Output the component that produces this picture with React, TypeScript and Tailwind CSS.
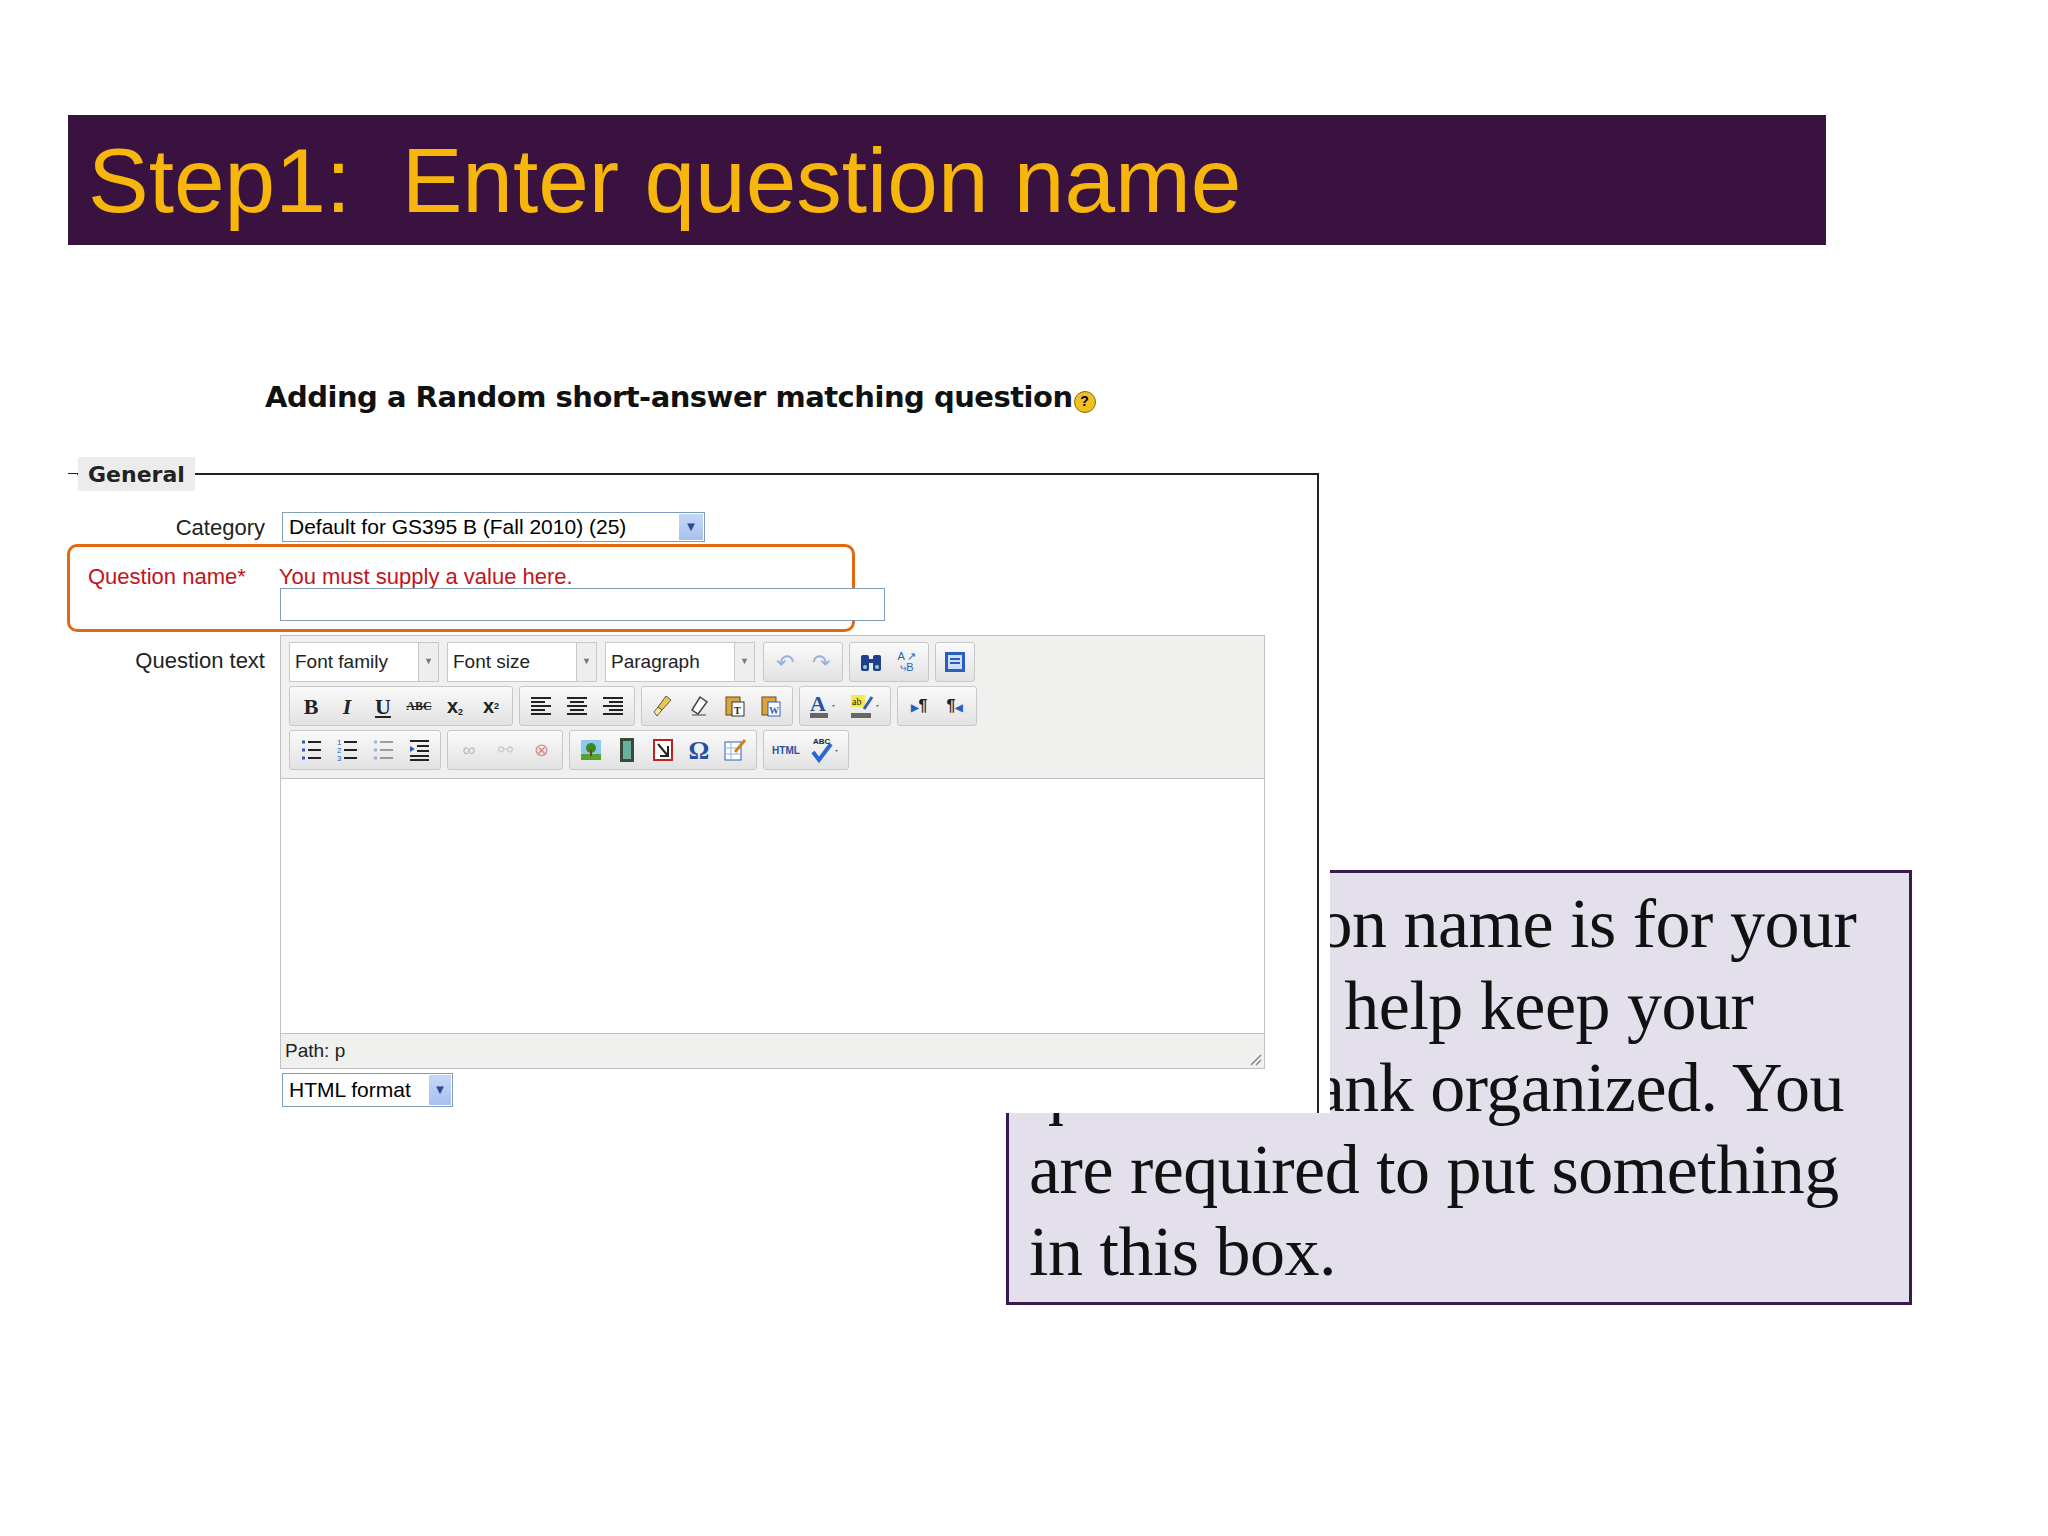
import React from "react";

const Btn = ({ children, w = 36 }: { children: React.ReactNode; w?: number }) => (
  <div className="flex items-center justify-center h-[34px]" style={{ width: w }}>{children}</div>
);
const Group = ({ children }: { children: React.ReactNode }) => (
  <div className="flex items-center px-[3px] h-[40px] border border-[#c8c8c8] rounded-[3px] bg-gradient-to-b from-[#fafafa] to-[#e2e2e2] mr-[6px]">{children}</div>
);
const Sel = ({ label, w }: { label: string; w: number }) => (
  <div className="flex h-[40px] border border-[#c8c8c8] bg-white mr-[8px]" style={{ width: w }}>
    <div className="flex-1 flex items-center pl-[5px] text-[19px] text-[#222]">{label}</div>
    <div className="w-[20px] border-l border-[#c8c8c8] bg-[#eee] flex items-center justify-center text-[9px] text-[#777]">▼</div>
  </div>
);
const Lines = ({ align }: { align: "l" | "c" | "r" }) => (
  <svg width="22" height="20" viewBox="0 0 22 20">
    {[2, 6, 10, 14, 18].map((y, i) => {
      const full = i % 2 === 0;
      const w = full ? 20 : 14;
      const x = align === "l" ? 1 : align === "c" ? 11 - w / 2 : 21 - w;
      return <rect key={y} x={x} y={y - 1} width={w} height="2" fill="#222" />;
    })}
  </svg>
);
const ListIcon = ({ num, dim }: { num?: boolean; dim?: boolean }) => (
  <svg width="22" height="24" viewBox="0 0 22 24" opacity={dim ? 0.4 : 1}>
    {[4, 12, 20].map((y, i) => (
      <g key={y}>
        {num ? <text x="1" y={y + 3} fontSize="8" fill="#2a5fc0" fontFamily="Liberation Sans">{i + 1}</text> : <rect x="2" y={y - 1.5} width="3" height="3" fill="#2a5fc0" />}
        <rect x="8" y={y - 1} width="13" height="2" fill="#222" />
      </g>
    ))}
  </svg>
);

export default function App() {
  return (
    <div className="relative w-[2048px] h-[1536px] bg-white overflow-hidden" style={{ fontFamily: "'Liberation Sans', Arial, sans-serif" }}>
      <div className="pt-[115px] pl-[68px]">
        <div className="w-[1758px] h-[130px] bg-[#3a1240] flex items-center pl-[20px]">
          <span className="text-[#f6b60b] text-[91px] leading-none">Step1:&nbsp; Enter question name</span>
        </div>
      </div>

      {/* callout */}
      <div className="absolute left-[1006px] top-[870px] w-[906px] h-[435px] bg-[#e3dfeb] border-[3px] border-[#3b1a50] z-0 pl-[20px] pt-[10px]" style={{ fontFamily: "'Liberation Serif', 'Times New Roman', serif" }}>
        <div className="text-[70px] leading-[82px] text-[#111] whitespace-pre tracking-[-0.5px]">
          {"The question name is for your\nown use to help keep your\nquestion bank organized. You\nare required to put something\nin this box."}
        </div>
      </div>

      {/* form image */}
      <div className="relative z-10 bg-white w-[1330px] h-[868px] overflow-hidden">
        <div className="flex items-center pl-[265px] pt-[135px] h-[170px]">
          <span className="text-[29px] font-bold text-[#111]" style={{ fontFamily: "'DejaVu Sans', Verdana, sans-serif", letterSpacing: "-0.5px" }}>Adding a Random short-answer matching question</span>
          <span className="ml-[1px] mt-[8px] w-[22px] h-[22px] rounded-full bg-[#f0c020] border border-[#8a6a00] text-[14px] font-bold flex items-center justify-center text-black">?</span>
        </div>

        <div className="relative mt-[58px] ml-[68px] w-[1251px] h-[700px] border-t-2 border-r-2 border-[#222]">
          <div className="absolute -top-[18px] left-[10px] h-[34px] px-[10px] bg-[#ececec] flex items-center text-[22px] font-bold text-[#222]" style={{ fontFamily: "'DejaVu Sans', Verdana, sans-serif" }}>General</div>
          <div className="absolute -top-[1px] -left-[1px] w-[10px] h-[2px] bg-white" />

          <div className="text-[22px] text-[#222]">
            <div className="flex items-center mt-[37px] h-[30px]">
              <div className="w-[197px] text-right">Category</div>
              <div className="ml-[17px] w-[423px] h-[30px] border border-[#7f9db9] flex">
                <div className="flex-1 flex items-center pl-[6px] text-[21px] text-black">Default for GS395 B (Fall 2010) (25)</div>
                <div className="w-[26px] bg-gradient-to-b from-[#c6d8f8] to-[#a8c0ee] border border-white flex items-center justify-center text-[#2a4a90] text-[13px]">▼</div>
              </div>
            </div>

            <div className="relative -ml-[1px] mt-[2px] w-[788px] h-[88px] border-[3px] border-[#e2690f] rounded-[10px]">
              <div className="absolute left-[18px] top-[13px] text-[#c0141c] flex text-[22px]">
                <span>Question name*</span>
                <span className="ml-[33px]">You must supply a value here.</span>
              </div>
            </div>
            <div className="absolute left-[212px] top-[113px] w-[605px] h-[33px] border border-[#7f9db9] bg-white z-10" />

            <div className="flex mt-[3px]">
              <div className="w-[197px] text-right pt-[9px]">Question text</div>
              <div className="ml-[15px]">
                <div className="w-[985px] border border-[#c0c0c0]">
                  <div className="bg-[#f0f0ee] px-[8px] pt-[6px] pb-[8px] border-b border-[#c0c0c0] flex flex-col gap-[4px]">
                    <div className="flex items-center">
                      <Sel label="Font family" w={150} />
                      <Sel label="Font size" w={150} />
                      <Sel label="Paragraph" w={150} />
                      <Group>
                        <Btn><span className="text-[#9bb0d8] text-[22px]">↶</span></Btn>
                        <Btn><span className="text-[#9bb0d8] text-[22px]">↷</span></Btn>
                      </Group>
                      <Group>
                        <Btn><svg width="24" height="22" viewBox="0 0 24 22"><rect x="2" y="4" width="8" height="16" rx="2" fill="#1e3f8a" /><rect x="14" y="4" width="8" height="16" rx="2" fill="#1e3f8a" /><rect x="8" y="8" width="8" height="4" fill="#1e3f8a" /><circle cx="6" cy="16" r="2" fill="#9cc" /><circle cx="18" cy="16" r="2" fill="#9cc" /></svg></Btn>
                        <Btn><span className="text-[11px] text-[#2a5fc0] leading-[11px] text-center">A ↗<br />⤷B</span></Btn>
                      </Group>
                      <Group>
                        <Btn w={32}><svg width="22" height="22" viewBox="0 0 22 22"><rect x="1" y="1" width="20" height="20" fill="#2a5fc0" /><rect x="4" y="4" width="14" height="14" fill="#cfe0ff" /><rect x="6" y="7" width="10" height="2" fill="#2a5fc0" /><rect x="6" y="11" width="10" height="2" fill="#2a5fc0" /></svg></Btn>
                      </Group>
                    </div>
                    <div className="flex items-center" style={{ fontFamily: "'Liberation Serif', serif" }}>
                      <Group>
                        <Btn><b className="text-[22px]">B</b></Btn>
                        <Btn><i className="text-[22px] font-bold">I</i></Btn>
                        <Btn><u className="text-[22px] font-bold">U</u></Btn>
                        <Btn><s className="text-[12px] font-bold">ABC</s></Btn>
                        <Btn><span className="text-[20px] font-bold" style={{ fontFamily: "'Liberation Sans'" }}>x<sub className="text-[9px]">2</sub></span></Btn>
                        <Btn><span className="text-[20px] font-bold" style={{ fontFamily: "'Liberation Sans'" }}>x<sup className="text-[9px]">2</sup></span></Btn>
                      </Group>
                      <Group>
                        <Btn><Lines align="l" /></Btn>
                        <Btn><Lines align="c" /></Btn>
                        <Btn><Lines align="r" /></Btn>
                      </Group>
                      <Group>
                        <Btn><svg width="22" height="24" viewBox="0 0 22 24"><path d="M14 2 L19 6 L10 16 L6 13 Z" fill="#e8c45a" stroke="#6a5a20" /><path d="M6 13 L10 16 L5 22 L2 18 Z" fill="#f4e8b0" stroke="#6a5a20" /></svg></Btn>
                        <Btn><svg width="22" height="24" viewBox="0 0 22 24"><path d="M12 3 L19 8 L10 20 L4 16 Z" fill="#fff" stroke="#444" strokeWidth="1.5" /><path d="M4 21 H18" stroke="#444" /></svg></Btn>
                        <Btn><svg width="22" height="24" viewBox="0 0 22 24"><rect x="2" y="3" width="14" height="18" fill="#d8a640" stroke="#6a4a10" /><rect x="8" y="8" width="12" height="14" fill="#fff" stroke="#333" /><text x="10" y="20" fontSize="10" fontWeight="bold" fill="#222">T</text></svg></Btn>
                        <Btn><svg width="22" height="24" viewBox="0 0 22 24"><rect x="2" y="3" width="14" height="18" fill="#d8a640" stroke="#6a4a10" /><rect x="8" y="8" width="12" height="14" fill="#fff" stroke="#2a5fc0" /><text x="9" y="20" fontSize="10" fontWeight="bold" fill="#2a5fc0">W</text></svg></Btn>
                      </Group>
                      <Group>
                        <Btn w={42}><svg width="30" height="26" viewBox="0 0 30 26"><text x="1" y="18" fontSize="22" fontWeight="bold" fill="#2a4fa0" fontFamily="Liberation Serif">A</text><rect x="1" y="20" width="18" height="5" fill="#666" /><path d="M23 12 l3 0 l-1.5 2 z" fill="#666" /></svg></Btn>
                        <Btn w={42}><svg width="32" height="26" viewBox="0 0 32 26"><rect x="1" y="2" width="14" height="12" fill="#f6e84a" /><text x="2" y="12" fontSize="10" fill="#222">ab</text><path d="M14 16 L22 4" stroke="#2a5fc0" strokeWidth="3" /><rect x="1" y="20" width="20" height="5" fill="#666" /><path d="M26 12 l3 0 l-1.5 2 z" fill="#666" /></svg></Btn>
                      </Group>
                      <Group>
                        <Btn><span className="text-[16px] font-bold" style={{ fontFamily: "'Liberation Sans'" }}><span className="text-[#2a5fc0] text-[10px]">▶</span>¶</span></Btn>
                        <Btn><span className="text-[16px] font-bold" style={{ fontFamily: "'Liberation Sans'" }}>¶<span className="text-[#2a5fc0] text-[10px]">◀</span></span></Btn>
                      </Group>
                    </div>
                    <div className="flex items-center">
                      <Group>
                        <Btn><ListIcon /></Btn>
                        <Btn><ListIcon num /></Btn>
                        <Btn><ListIcon dim /></Btn>
                        <Btn><svg width="22" height="24" viewBox="0 0 22 24">{[3, 8, 13, 18, 22].map(y => <rect key={y} x={y === 8 || y === 13 ? 9 : 2} y={y - 1} width={y === 8 || y === 13 ? 12 : 19} height="2" fill="#222" />)}<path d="M2 8 l5 3 l-5 3 z" fill="#2a5fc0" /></svg></Btn>
                      </Group>
                      <Group>
                        <Btn><span className="text-[#bbb] text-[18px]">∞</span></Btn>
                        <Btn><span className="text-[#ccc] text-[18px]">⚯</span></Btn>
                        <Btn><span className="text-[#d09090] text-[18px]">⊗</span></Btn>
                      </Group>
                      <Group>
                        <Btn><svg width="22" height="24" viewBox="0 0 22 24"><rect x="1" y="2" width="20" height="20" fill="#8ec8f0" /><rect x="1" y="16" width="20" height="6" fill="#5aa030" /><circle cx="11" cy="10" r="5" fill="#3a8a20" /><rect x="10" y="12" width="2" height="6" fill="#6a4a10" /></svg></Btn>
                        <Btn><svg width="18" height="26" viewBox="0 0 18 26"><rect x="2" y="1" width="14" height="24" fill="#3a4a3a" /><rect x="5" y="4" width="8" height="18" fill="#6ab0a0" /></svg></Btn>
                        <Btn><svg width="22" height="24" viewBox="0 0 22 24"><rect x="2" y="2" width="18" height="20" fill="#fff" stroke="#c02020" strokeWidth="2" /><path d="M6 6 L16 18 M16 8 V18 H8" stroke="#222" strokeWidth="2" fill="none" /></svg></Btn>
                        <Btn><span className="text-[26px] text-[#2a4fa0] font-bold" style={{ fontFamily: "'Liberation Serif'" }}>Ω</span></Btn>
                        <Btn><svg width="24" height="24" viewBox="0 0 24 24"><rect x="2" y="4" width="16" height="18" fill="#fff" stroke="#2a5fc0" /><path d="M2 10 H18 M2 16 H18 M8 4 V22" stroke="#8ab0e0" /><path d="M12 14 L22 2" stroke="#d08020" strokeWidth="3" /></svg></Btn>
                      </Group>
                      <Group>
                        <Btn w={38}><span className="text-[10px] font-bold text-[#2a4fa0]">HTML</span></Btn>
                        <Btn w={40}><svg width="32" height="28" viewBox="0 0 32 28"><text x="4" y="8" fontSize="8" fontWeight="bold" fill="#222">ABC</text><path d="M4 16 L10 24 L22 8" stroke="#2a6ad0" strokeWidth="4" fill="none" /><path d="M26 14 l3 0 l-1.5 2 z" fill="#666" /></svg></Btn>
                      </Group>
                    </div>
                  </div>
                  <div className="h-[255px] bg-white border-b border-[#c0c0c0]" />
                  <div className="h-[34px] bg-[#f0f0ee] flex items-center pl-[4px] text-[19px] text-[#222] relative">
                    Path: p
                    <svg className="absolute right-[2px] bottom-[2px]" width="14" height="14" viewBox="0 0 14 14"><path d="M13 3 L3 13 M13 8 L8 13" stroke="#888" strokeWidth="1.5" /></svg>
                  </div>
                </div>
                <div className="mt-[4px] ml-[2px] w-[171px] h-[34px] border border-[#7f9db9] flex">
                  <div className="flex-1 flex items-center pl-[6px] text-[21px] text-black">HTML format</div>
                  <div className="w-[24px] bg-gradient-to-b from-[#c6d8f8] to-[#a8c0ee] border border-white flex items-center justify-center text-[#2a4a90] text-[13px]">▼</div>
                </div>
              </div>
            </div>
          </div>
        </div>
      </div>
    </div>
  );
}
